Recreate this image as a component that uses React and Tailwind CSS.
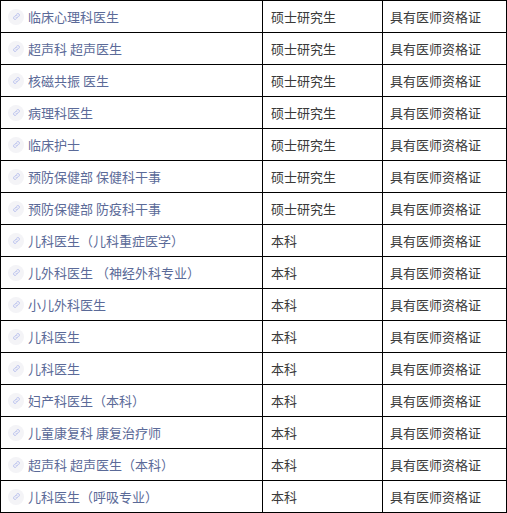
const rows = [
  ["临床心理科医生", "硕士研究生"],
  ["超声科 超声医生", "硕士研究生"],
  ["核磁共振 医生", "硕士研究生"],
  ["病理科医生", "硕士研究生"],
  ["临床护士", "硕士研究生"],
  ["预防保健部 保健科干事", "硕士研究生"],
  ["预防保健部 防疫科干事", "硕士研究生"],
  ["儿科医生（儿科重症医学）", "本科"],
  ["儿外科医生 （神经外科专业）", "本科"],
  ["小儿外科医生", "本科"],
  ["儿科医生", "本科"],
  ["儿科医生", "本科"],
  ["妇产科医生（本科）", "本科"],
  ["儿童康复科 康复治疗师", "本科"],
  ["超声科 超声医生（本科）", "本科"],
  ["儿科医生（呼吸专业）", "本科"],
];

function LinkIcon() {
  return (
    <span className="w-[16px] h-[16px] rounded-full bg-[#f4f4f7] flex items-center justify-center shrink-0">
      <svg width="9" height="9" viewBox="0 0 24 24" fill="none" stroke="#bcc3ee" strokeWidth="2.6" strokeLinecap="round">
        <path d="M10 14a4 4 0 0 0 5.7 0l3-3a4 4 0 0 0-5.7-5.7l-1 1" />
        <path d="M14 10a4 4 0 0 0-5.7 0l-3 3a4 4 0 0 0 5.7 5.7l1-1" />
      </svg>
    </span>
  );
}

export default function App() {
  return (
    <div className="bg-white w-[507px] h-[513px]" style={{ fontFamily: '"Noto Sans CJK SC", "Noto Sans", sans-serif' }}>
      <table className="table-fixed border-collapse w-[506px] text-[13px]">
        <colgroup>
          <col className="w-[262px]" />
          <col className="w-[120px]" />
          <col className="w-[124px]" />
        </colgroup>
        <tbody>
          {rows.map(([job, edu], i) => (
            <tr key={i} className="h-[32px]">
              <td className="border border-black px-[7px] p-0">
                <div className="flex items-center gap-[4px] text-[#5b6a98]">
                  <LinkIcon />
                  <span>{job}</span>
                </div>
              </td>
              <td className="border border-black pl-[8px] text-[#3a3a3a]">{edu}</td>
              <td className="border border-black pl-[7px] text-[#3a3a3a]">具有医师资格证</td>
            </tr>
          ))}
        </tbody>
      </table>
    </div>
  );
}
